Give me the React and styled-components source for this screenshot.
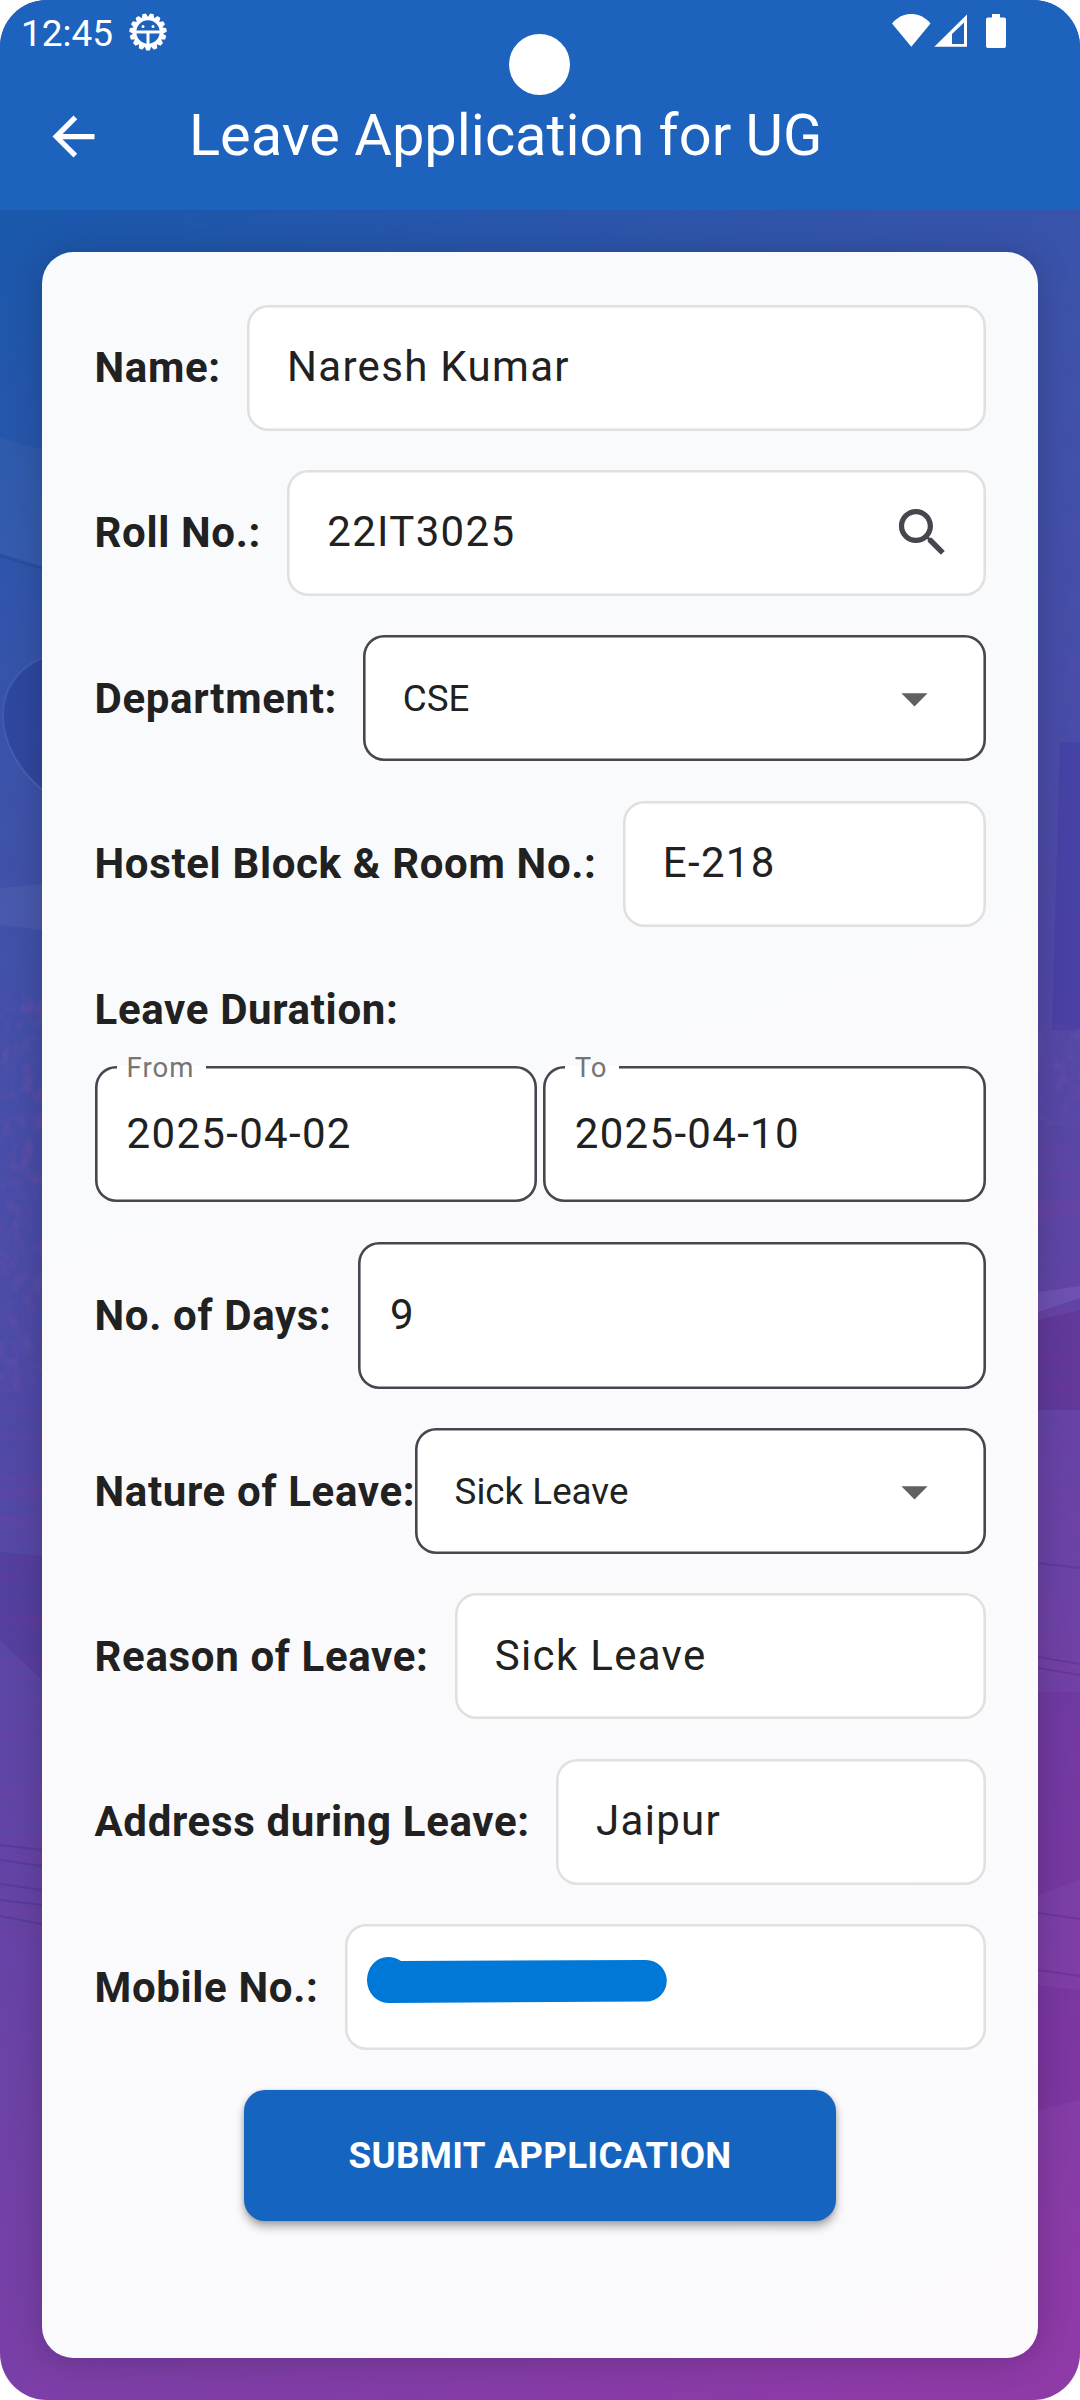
import React from "react";
import styled, { createGlobalStyle } from "styled-components";

const Global = createGlobalStyle`
  html, body { margin: 0; padding: 0; background: #fff; }
  * { box-sizing: border-box; }
  body { font-family: Roboto, "Liberation Sans", sans-serif; color: #212121; }
`;

const Screen = styled.div`
  position: relative;
  isolation: isolate;
  width: 1080px;
  height: 2400px;
  border-radius: 47px;
  overflow: hidden;
  display: flex;
  flex-direction: column;
  background: linear-gradient(155deg, #1a58ac 8%, #3c53aa 27%, #5049a7 50%, #6e42a6 73%, #8e3aa7 97%);
`;

const Backdrop = styled.svg`
  position: absolute;
  inset: 0;
  width: 1080px;
  height: 2400px;
  z-index: -1;
`;

const Header = styled.header`
  background: #1d62bc;
  height: 210px;
  flex: none;
  display: flex;
  flex-direction: column;
`;

const StatusBar = styled.div`
  height: 63px;
  display: flex;
  align-items: center;
  padding: 0 74px 0 21px;
  color: #fff;
`;

const Clock = styled.span`
  font-size: 37px;
  line-height: 43px;
  width: 108px;
  margin-top: 4px;
`;

const StatusIcons = styled.div`
  margin: -1px 0 0 auto;
  display: flex;
  align-items: center;
`;

const Camera = styled.div`
  position: absolute;
  left: 509px;
  top: 34px;
  width: 61px;
  height: 61px;
  border-radius: 50%;
  background: #fff;
`;

const Toolbar = styled.div`
  height: 147px;
  display: flex;
  align-items: center;
  padding-left: 42px;
  color: #fff;
`;

const Title = styled.h1`
  margin: -3px 0 0 84px;
  font-size: 57.75px;
  font-weight: 400;
  line-height: 68px;
  white-space: nowrap;
`;

const Icon = styled.svg`
  width: 63px;
  height: 63px;
  flex: none;
  fill: currentColor;
`;

const Card = styled.form`
  margin: 42px;
  flex: 1;
  border-radius: 31.5px;
  padding: 52.5px;
  display: flex;
  flex-direction: column;
  gap: 39.4px;
  background: linear-gradient(160deg, #f8fafc 0%, #fafafc 45%, #fbf9fc 100%);
  box-shadow: 0 2px 34px rgba(0, 0, 0, 0.2);
`;

const Row = styled.div`
  display: flex;
  align-items: center;
  gap: ${(p) => p.$gap ?? 26.25}px;
`;

const Label = styled.label`
  flex: none;
  font-size: 42px;
  line-height: 49px;
  font-weight: 700;
  letter-spacing: 0.656px;
  white-space: nowrap;
`;

const Field = styled.div`
  position: relative;
  flex: 1;
  min-width: 0;
  height: ${(p) => p.$height ?? 126}px;
  padding: 0 ${(p) => p.$pad ?? 39.4}px;
  border-radius: 21px;
  background: #fff;
  box-shadow: inset 0 0 0 2.6px ${(p) => (p.$dark ? "#49454f" : "#e0e0e0")};
  display: flex;
  align-items: center;
  justify-content: space-between;
`;

const Value = styled.span`
  font-size: 42px;
  line-height: 49px;
  letter-spacing: 1.312px;
  white-space: nowrap;
  margin: ${(p) => p.$lift ?? 0}px 0 0 0.6px;
`;

const Choice = styled.span`
  font-size: 36.75px;
  line-height: 43px;
  white-space: nowrap;
`;

const SearchIcon = styled(Icon)`
  color: #49454f;
  margin-right: -7.9px;
`;

const ArrowIcon = styled(Icon)`
  color: #616161;
`;

const Duration = styled.section`
  display: flex;
  flex-direction: column;
  gap: 32px;
  padding-top: 18.7px;
`;

const Floating = styled.span`
  position: absolute;
  left: 22.5px;
  top: -14px;
  padding: 0 12px 0 9.5px;
  font-size: 27.56px;
  line-height: 32px;
  letter-spacing: 1px;
  color: #757575;
  background: linear-gradient(#fff, #fff) 0 14px / 100% 3px no-repeat;
`;

const Scribble = styled.svg`
  width: 300px;
  height: 46px;
  margin: -15px 0 0 -17px;
`;

const Submit = styled.button`
  align-self: center;
  width: 592px;
  height: 131px;
  flex: none;
  border: 0;
  border-radius: 21px;
  background: #1565c0;
  color: #fff;
  font: 700 36.75px/43px Roboto, "Liberation Sans", sans-serif;
  letter-spacing: 0.3px;
  box-shadow: 0 6px 10px rgba(0, 0, 0, 0.3), 0 1px 4px rgba(0, 0, 0, 0.16);
`;

const teeth = Array.from({ length: 15 }, (_, i) => i * 24 + 12);

function BugIcon() {
  return (
    <svg width="38" height="38" viewBox="-19 -19 38 38">
      <g fill="#fff">
        {teeth.map((a) => (
          <path key={a} d="M-3.6 -13.5L-1.8 -18.6H1.8L3.6 -13.5Z" transform={`rotate(${a})`} />
        ))}
      </g>
      <circle r="13.3" fill="none" stroke="#fff" strokeWidth="3.2" />
      <path d="M-13 0H13M0 0V13" stroke="#fff" strokeWidth="3" />
      <circle cx="-5" cy="-5.5" r="1.5" fill="#fff" />
      <circle cx="5" cy="-5.5" r="1.5" fill="#fff" />
    </svg>
  );
}

function Signals() {
  return (
    <svg width="114" height="34" viewBox="892 14 114 34" fill="#fff">
      <path d="M892 23.5C902.500 10.800 920 10.800 930.500 23.500L911.300 46.800Z" />
      <path fillRule="evenodd" d="M967 14.500V46.800H934.300ZM964 22.500L952 34V44H964Z" />
      <path d="M992 14H1000V17.500H1004Q1006 17.500 1006 19.500V46Q1006 48 1004 48H988Q986 48 986 46V19.500Q986 17.500 988 17.500H992Z" />
    </svg>
  );
}

function Scenery() {
  return (
    <Backdrop viewBox="0 0 1080 2400">
      <defs>
        <filter id="leaf" x="0" y="0" width="100%" height="100%">
          <feTurbulence type="fractalNoise" baseFrequency="0.09 0.07" numOctaves="3" seed="4" />
          <feColorMatrix values="0 0 0 0 0.15  0 0 0 0 0.08  0 0 0 0 0.4  2.4 0 0 0 -1.05" />
        </filter>
        <filter id="ground" x="0" y="0" width="100%" height="100%">
          <feTurbulence type="fractalNoise" baseFrequency="0.008 0.07" numOctaves="3" seed="9" />
          <feColorMatrix values="0 0 0 0 0.2  0 0 0 0 0.05  0 0 0 0 0.35  2 0 0 0 -0.9" />
        </filter>
      </defs>
      <path d="M0 438L42 450V568L0 555Z" fill="#fff" opacity=".035" />
      <path d="M0 555L42 568" stroke="#1b2f80" strokeWidth="3" opacity=".25" />
      <path d="M42 658C-10 680 -10 745 42 788Z" fill="#1d2f88" opacity=".32" />
      <path d="M42 658C-10 680 -10 745 42 790" fill="none" stroke="#5f72c0" strokeWidth="2" opacity=".35" />
      <path d="M0 888L42 884V930L0 925Z" fill="#fff" opacity=".05" />
      <path d="M1060 742H1080V1030H1052Z" fill="#3a2fa0" opacity=".28" />
      <rect x="0" y="990" width="42" height="400" filter="url(#leaf)" opacity=".55" />
      <rect x="1038" y="1025" width="42" height="100" filter="url(#leaf)" opacity=".5" />
      <rect x="0" y="1380" width="42" height="560" filter="url(#ground)" opacity=".45" />
      <rect x="1038" y="1125" width="42" height="580" filter="url(#ground)" opacity=".5" />
      <path d="M1038 1292L1080 1286V1298L1038 1312Z" fill="#a07fe0" opacity=".22" />
      <path d="M0 1552L42 1556V1680L0 1640Z" fill="#3c1c78" opacity=".15" />
      <path d="M1038 1692H1080V1880L1038 1895Z" fill="#6a2090" opacity=".2" />
      <path d="M1038 1320L1080 1310V1410H1038Z" fill="#5c1c80" opacity=".28" />
      <path d="M1038 1985L1080 1990V2100L1038 2110Z" fill="#6a2090" opacity=".2" />
      <g stroke="#4d2a86" strokeWidth="2" opacity=".35">
        <path d="M0 1845L42 1850M0 1860L42 1866M0 1884L42 1890M0 1900L42 1905M0 1916L42 1924" />
        <path d="M1038 1563L1080 1568M1038 1657L1080 1664M1038 1668L1080 1675M1038 1913L1080 1919M1038 1970L1080 1976" />
      </g>
    </Backdrop>
  );
}

function TextRow({ label, value }) {
  return (
    <Row>
      <Label>{label}</Label>
      <Field><Value $lift={-2.6}>{value}</Value></Field>
    </Row>
  );
}

function SelectRow({ label, value, gap }) {
  return (
    <Row $gap={gap}>
      <Label>{label}</Label>
      <Field $dark>
        <Choice>{value}</Choice>
        <ArrowIcon viewBox="0 0 24 24"><path d="M7 10l5 5 5-5z" /></ArrowIcon>
      </Field>
    </Row>
  );
}

function DateField({ label, value }) {
  return (
    <Field $dark $height={136.5} $pad={31.5}>
      <Floating>{label}</Floating>
      <Value $lift={-2}>{value}</Value>
    </Field>
  );
}

export default function App() {
  return (
    <>
      <Global />
      <Screen>
        <Scenery />
        <Header>
          <StatusBar>
            <Clock>12:45</Clock>
            <BugIcon />
            <StatusIcons><Signals /></StatusIcons>
          </StatusBar>
          <Camera />
          <Toolbar>
            <Icon viewBox="0 0 24 24">
              <path d="M20 11H7.830l5.590-5.590L12 4l-8 8 8 8 1.410-1.410L7.830 13H20v-2z" />
            </Icon>
            <Title>Leave Application for UG</Title>
          </Toolbar>
        </Header>
        <Card>
          <TextRow label="Name:" value="Naresh Kumar" />
          <Row>
            <Label>Roll No.:</Label>
            <Field>
              <Value $lift={-2.6}>22IT3025</Value>
              <SearchIcon viewBox="0 0 24 24">
                <path d="M15.500 14h-.79l-.28-.27C15.410 12.590 16 11.110 16 9.500 16 5.910 13.090 3 9.500 3S3 5.910 3 9.500 5.910 16 9.500 16c1.610 0 3.090-.59 4.230-1.570l.27.28v.79l5 4.990L20.490 19l-4.990-5zm-6 0C7.010 14 5 11.990 5 9.500S7.010 5 9.500 5 14 7.010 14 9.500 11.990 14 9.500 14z" />
              </SearchIcon>
            </Field>
          </Row>
          <SelectRow label="Department:" value="CSE" />
          <TextRow label="Hostel Block & Room No.:" value="E-218" />
          <Duration>
            <Label>Leave Duration:</Label>
            <Row $gap={5.25}>
              <DateField label="From" value="2025-04-02" />
              <DateField label="To" value="2025-04-10" />
            </Row>
          </Duration>
          <Row>
            <Label>No. of Days:</Label>
            <Field $dark $height={147} $pad={31.5}><Value $lift={-1}>9</Value></Field>
          </Row>
          <SelectRow label="Nature of Leave:" value="Sick Leave" gap={0} />
          <TextRow label="Reason of Leave:" value="Sick Leave" />
          <TextRow label="Address during Leave:" value="Jaipur" />
          <Row>
            <Label>Mobile No.:</Label>
            <Field>
              <Scribble viewBox="0 0 300 46" fill="#0078d7">
                <path d="M21 0Q28 0 34 4L279 3A20.500 20.500 0 0 1 279 44.500L21 46A21 23 0 0 1 0 24A21 23 0 0 1 21 0Z" />
              </Scribble>
            </Field>
          </Row>
          <Submit type="button">SUBMIT APPLICATION</Submit>
        </Card>
      </Screen>
    </>
  );
}
